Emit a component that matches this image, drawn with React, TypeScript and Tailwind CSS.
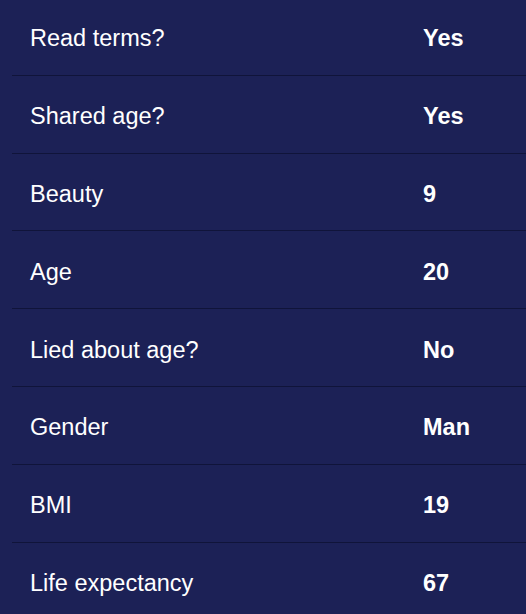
import React from 'react';

const rows = [
  { label: 'Read terms?', value: 'Yes' },
  { label: 'Shared age?', value: 'Yes' },
  { label: 'Beauty', value: '9' },
  { label: 'Age', value: '20' },
  { label: 'Lied about age?', value: 'No' },
  { label: 'Gender', value: 'Man' },
  { label: 'BMI', value: '19' },
  { label: 'Life expectancy', value: '67' },
];

const App = () => {
  return (
    <div
      className="w-[526px] h-[614px] overflow-hidden bg-[#1c2156] text-white"
      style={{ fontFamily: '"Liberation Sans", Arial, sans-serif' }}
    >
      <div className="ml-[12px] -mt-[2px]">
        {rows.map((row) => (
          <div
            key={row.label}
            className="grid grid-cols-[393px_1fr] items-center h-[77.83px] pl-[18px] pt-[5px] border-b border-[#10143a] text-[23.5px] leading-[1.5]"
          >
            <span>{row.label}</span>
            <span className="font-bold">{row.value}</span>
          </div>
        ))}
      </div>
    </div>
  );
};

export default App;
